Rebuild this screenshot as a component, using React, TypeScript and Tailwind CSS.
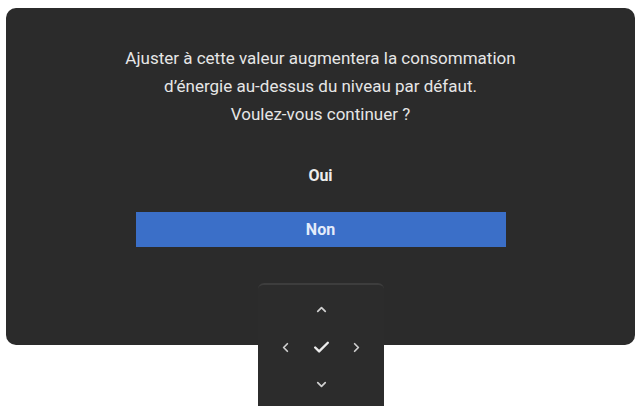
import { ChevronUp, ChevronDown, ChevronLeft, ChevronRight, Check } from 'lucide-react'

const font = { fontFamily: 'Roboto, "Liberation Sans", sans-serif' }

export default function App() {
  return (
    <div className="relative h-[406px] w-[640px] overflow-hidden bg-white" style={font}>
      {/* Dialog */}
      <div className="ml-[6px] mt-[8px] flex h-[337px] w-[629px] flex-col items-center rounded-[10px] bg-[#2b2b2b]">
        <div className="mt-[36px] flex flex-col items-center text-[17px] leading-[28px] text-[#e6e6e6]">
          <p>Ajuster à cette valeur augmentera la consommation</p>
          <p>d’énergie au-dessus du niveau par défaut.</p>
          <p>Voulez-vous continuer ?</p>
        </div>
        <p className="mt-[38px] text-[16px] font-bold leading-[20px] text-[#ededed]">Oui</p>
        <div className="mt-[26px] flex h-[35px] w-[370px] items-center justify-center bg-[#3b6fc8] text-[16px] font-bold text-[#e4ecfa]">
          Non
        </div>
      </div>

      {/* Nav pad */}
      <div className="absolute left-[258px] top-[283px] flex h-[130px] w-[126px] flex-col items-center rounded-[6px] border-t-2 border-[#3d3d3d] bg-[#2c2c2c] text-[#d0d0d0]">
        <ChevronUp size={15} strokeWidth={2.75} className="mt-[17px]" />
        <div className="mt-[21px] flex w-[86px] items-center justify-between">
          <ChevronLeft size={15} strokeWidth={2.75} />
          <Check size={19} strokeWidth={3} className="text-[#ececec]" />
          <ChevronRight size={15} strokeWidth={2.75} />
        </div>
        <ChevronDown size={15} strokeWidth={2.75} className="mt-[20px]" />
      </div>
    </div>
  )
}
